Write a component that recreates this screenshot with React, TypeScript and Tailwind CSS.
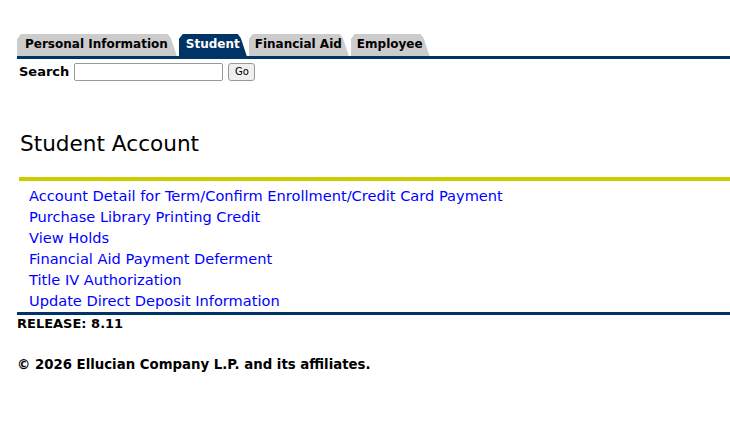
const tabs = [
  { label: "Personal Information", active: false, pad: "pl-[8px] pr-[9px]" },
  { label: "Student", active: true, pad: "pl-[7px] pr-[7px]" },
  { label: "Financial Aid", active: false, pad: "pl-[6px] pr-[7px]" },
  { label: "Employee", active: false, pad: "pl-[6px] pr-[7px]" },
];

const links = [
  "Account Detail for Term/Confirm Enrollment/Credit Card Payment",
  "Purchase Library Printing Credit",
  "View Holds",
  "Financial Aid Payment Deferment",
  "Title IV Authorization",
  "Update Direct Deposit Information",
];

export default function App() {
  return (
    <div className="min-h-[438px] w-[730px] bg-white font-['DejaVu_Sans',Verdana,sans-serif] text-black">
      <div className="pl-[17px] pt-[34px]">
        {/* tab strip */}
        <div className="flex gap-[2px]">
          {tabs.map((t) => (
            <div
              key={t.label}
              className={
                "h-[22px] pt-[2px] text-[12px] font-bold leading-[16px] [clip-path:polygon(0_5px,4px_0,calc(100%_-_9px)_0,calc(100%_-_6px)_4px,100%_100%,0_100%)] " +
                t.pad +
                " " +
                (t.active ? "bg-[#003366] text-white" : "bg-[#cccccc] text-black")
              }
            >
              {t.label}
            </div>
          ))}
        </div>
        <div className="h-[3px] bg-[#003366]" />

        <div className="mt-[3px] flex items-center pl-[2px]">
          <span className="text-[13px] font-bold">Search</span>
          <input className="ml-[5px] h-[18px] w-[149px] border border-[#999999] rounded-[2px] bg-white" />
          <button className="ml-[5px] h-[18px] w-[27px] rounded-[3px] border border-[#999999] bg-[#efefef] text-[10px] leading-none">
            Go
          </button>
        </div>
      </div>

      <h2 className="ml-[20px] mt-[49px] text-[21.6px] leading-[26px]">Student Account</h2>

      <div className="ml-[19px] mt-[20px] h-[4px] bg-[#cccc00]" />

      <div className="ml-[29px] mt-[4px] flex flex-col">
        {links.map((l) => (
          <a key={l} href="#" className="text-[14.6px] leading-[21px] text-[#0000ff]">
            {l}
          </a>
        ))}
      </div>

      <div className="ml-[17px] mt-[1px] h-[3px] bg-[#003366]" />
      <div className="ml-[17px] mt-[1px] text-[13px] font-bold leading-[15px]">RELEASE: 8.11</div>
      <div className="ml-[17px] mt-[26px] text-[13.3px] font-bold leading-[15px]">
        © 2026 Ellucian Company L.P. and its affiliates.
      </div>
    </div>
  );
}
